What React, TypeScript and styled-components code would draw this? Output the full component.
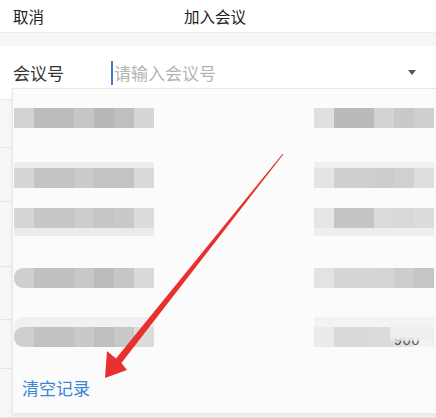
import React from 'react';
import styled, { createGlobalStyle } from 'styled-components';

const GlobalStyle = createGlobalStyle`
  html, body {
    margin: 0;
    padding: 0;
    background: #ffffff;
    font-family: "Noto Sans CJK SC", "Noto Sans", sans-serif;
  }
`;

const Page = styled.div`
  position: relative;
  width: 436px;
  height: 418px;
  overflow: hidden;
  background: #ffffff;
`;

const Header = styled.div`
  height: 32px;
  display: grid;
  grid-template-columns: 1fr auto 1fr;
  align-items: center;
  padding: 0 13px;
  font-size: 15.5px;
  color: #222;
  box-sizing: border-box;
`;

const Title = styled.div`
  margin-left: -6px;
  color: #222;
`;

const Band = styled.div`
  height: 13px;
  background: #f5f6f8;
  border-top: 1px solid #ececee;
`;

const FieldRow = styled.div`
  height: 53px;
  display: flex;
  align-items: center;
  padding: 0 20px 0 13px;
  border-bottom: 1px solid #ececec;
  font-size: 17px;
`;

const Label = styled.div`
  width: 98px;
  color: #333;
  flex-shrink: 0;
`;

const Caret = styled.span`
  width: 2px;
  height: 24px;
  background: #3a7bd5;
  margin-right: 1px;
`;

const Placeholder = styled.span`
  flex: 1;
  color: #b3b3b3;
`;

const Triangle = styled.span`
  width: 0;
  height: 0;
  border-left: 4px solid transparent;
  border-right: 4px solid transparent;
  border-top: 5px solid #555;
`;

const BehindList = styled.div`
  background: #f6f7f9;
`;

const BehindRow = styled.div<{ $h: number }>`
  height: ${p => p.$h}px;
  border-bottom: 1px solid #e6e6e8;
`;

const Panel = styled.div`
  position: absolute;
  top: 88px;
  left: 12px;
  width: 430px;
  bottom: 4px;
  background: #fbfbfb;
  border: 1px solid #e8e8e8;
  box-shadow: 0 2px 4px rgba(0, 0, 0, 0.08);
  box-sizing: border-box;
  padding-top: 19px;
`;

const RecordRow = styled.div<{ $top: number }>`
  display: flex;
  margin-top: ${p => p.$top}px;
  padding-left: 1px;
  height: 20px;
`;

const Blur = styled.div<{ $round?: boolean; $halo?: string }>`
  display: flex;
  flex-shrink: 0;
  height: 20px;
  overflow: hidden;
  border-radius: ${p => (p.$round ? '9px 0 0 9px' : '0')};
  box-shadow: ${p => p.$halo || 'none'};
`;

const Cell = styled.div<{ $w: number; $c: string }>`
  width: ${p => p.$w}px;
  flex-shrink: 0;
  background: ${p => p.$c};
`;

const Spacer = styled.div`
  width: 160px;
  flex-shrink: 0;
`;

const RightWrap = styled.div`
  position: relative;
  flex-shrink: 0;
  width: 120px;
`;

const Digits = styled.span`
  position: absolute;
  left: 80px;
  top: 6px;
  font-family: "Liberation Sans", sans-serif;
  font-size: 14px;
  line-height: 14px;
  letter-spacing: 1px;
  color: #555;
`;

const DigitsVeil = styled.div`
  position: absolute;
  left: 76px;
  top: 0;
  width: 44px;
  height: 14px;
  background: linear-gradient(to bottom, #eeeeee 70%, rgba(240, 240, 240, 0.6));
`;

const ClearLink = styled.div`
  margin-top: 29px;
  padding-left: 9px;
  font-size: 17px;
  color: #3b84d6;
  line-height: 24px;
`;

const Overlay = styled.svg`
  position: absolute;
  left: 0;
  top: 0;
  pointer-events: none;
`;

const widths = [20, 40, 20, 20, 20, 20];

type Row = {
  top: number;
  left: string[];
  right: string[];
  round?: boolean;
  haloL?: string;
  haloR?: string;
  digits?: boolean;
};

const rows: Row[] = [
  {
    top: 0,
    left: ['#d2d2d2', '#bcbcbc', '#c6c6c6', '#b8b8b8', '#bfbfbf', '#d6d6d6'],
    right: ['#e0e0e0', '#bababa', '#d3d3d3', '#c9c9c9', '#cfcfcf', '#d9d9d9'],
  },
  {
    top: 40,
    left: ['#d6d6d6', '#c4c4c4', '#cbcbcb', '#c3c3c3', '#c3c3c3', '#dadada'],
    right: ['#e4e4e4', '#cfcfcf', '#cdcdcd', '#d0d0d0', '#dedede', '#e2e2e2'],
    haloL: '0 -6px 0 #ededed',
    haloR: '0 -6px 0 #efefef',
  },
  {
    top: 20,
    left: ['#d6d6d6', '#c6c6c6', '#cdcdcd', '#c6c6c6', '#c9c9c9', '#dcdcdc'],
    right: ['#e6e6e6', '#c5c5c5', '#dbdbdb', '#d9d9d9', '#dcdcdc', '#e5e5e5'],
    haloL: '0 8px 0 #ebebeb',
    haloR: '0 8px 0 #eeeeee',
  },
  {
    top: 40,
    left: ['#cfcfcf', '#c0c0c0', '#c8c8c8', '#bcbcbc', '#c6c6c6', '#dadada'],
    right: ['#e3e3e3', '#d6d6d6', '#d4d4d4', '#cdcdcd', '#c6c6c6', '#d6d6d6'],
    round: true,
  },
  {
    top: 39,
    left: ['#cfcfcf', '#c2c2c2', '#c9c9c9', '#bfbfbf', '#c8c8c8', '#dcdcdc'],
    right: ['#ebebeb', '#dadada', '#dcdcdc', '#e0e0e0', '#f2f2f2', '#f6f6f6'],
    round: true,
    haloL: '0 -10px 0 #f1f1f1',
    haloR: '0 -10px 0 #f3f3f3',
    digits: true,
  },
];

const cells = (colors: string[]) =>
  colors.map((c, i) => <Cell key={i} $w={widths[i]} $c={c} />);

const App = () => {
  return (
    <>
      <GlobalStyle />
      <Page>
        <Header>
          <div>取消</div>
          <Title>加入会议</Title>
          <div />
        </Header>
        <Band />
        <FieldRow>
          <Label>会议号</Label>
          <Caret />
          <Placeholder>请输入会议号</Placeholder>
          <Triangle />
        </FieldRow>
        <BehindList>
          <BehindRow $h={47} />
          <BehindRow $h={53} />
          <BehindRow $h={64} />
          <BehindRow $h={52} />
          <BehindRow $h={48} />
          <BehindRow $h={48} />
        </BehindList>

        <Panel>
          {rows.map((r, i) => (
            <RecordRow key={i} $top={r.top}>
              <Blur $round={r.round} $halo={r.haloL}>
                {cells(r.left)}
              </Blur>
              <Spacer />
              <RightWrap>
                <Blur $halo={r.haloR}>{cells(r.right)}</Blur>
                {r.digits && <Digits>900</Digits>}
                {r.digits && <DigitsVeil />}
              </RightWrap>
            </RecordRow>
          ))}
          <ClearLink>清空记录</ClearLink>
        </Panel>

        <Overlay width="436" height="418" viewBox="0 0 436 418">
          <polygon
            points="105,378 107,351 116,358.6 282.6,153.7 283.4,154.3 121.4,363 127,370"
            fill="#e8312f"
          />
        </Overlay>
      </Page>
    </>
  );
};

export default App;
